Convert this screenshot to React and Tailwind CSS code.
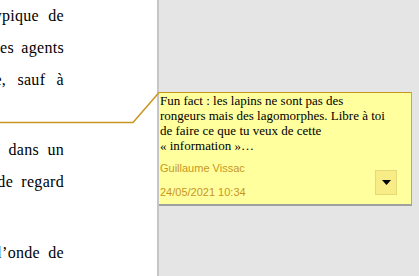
export default function App() {
  const serif = { fontFamily: '"Liberation Serif", "Times New Roman", serif' };

  const Line = ({ children, className = "" }) => (
    <div className={`flex h-[32px] items-center justify-end overflow-hidden whitespace-nowrap leading-[32px] ${className}`}>
      {children}
    </div>
  );

  return (
    <div className="relative flex h-[276px] w-[419px] overflow-hidden bg-[#e5e5e5]">
      {/* page */}
      <div className="w-[157px] shrink-0 bg-white">
        <div className="w-[64px] text-[16px] tracking-[0.3px] text-black" style={serif}>
          <Line className="[word-spacing:5px]">typique de</Line>
          <Line className="[word-spacing:3px]">les agents</Line>
          <Line className="[word-spacing:7px]">monde, sauf à</Line>
          <Line>&nbsp;</Line>
          <div className="mt-[6px]">
            <Line className="[word-spacing:4px]">dans un</Line>
            <Line className="[word-spacing:4px]">de regard</Line>
            <Line>&nbsp;</Line>
          </div>
          <div className="mt-[7px]">
            <Line className="[word-spacing:4px]">l’onde de</Line>
          </div>
        </div>
      </div>
      <div className="w-[2px] shrink-0 bg-[#c6c6c6]" />

      {/* comment margin */}
      <div className="flex-1 pt-[92px]">
        <div className="w-[253px] border-t border-r border-b-2 border-t-[#c8961e] border-r-[#a8a8a8] border-b-[#a0a0a0] bg-[#ffff9e]">
          <p className="pl-[1px] text-[13px] leading-[15px] text-black" style={serif}>
            Fun fact : les lapins ne sont pas des
            <br />
            rongeurs mais des lagomorphes. Libre à toi
            <br />
            de faire ce que tu veux de cette
            <br />« information »…
          </p>
          <div
            className="flex justify-between pt-[8px] pb-[5px] pl-[1px] pr-[14px] text-[11px] leading-[14px] text-[#c8961e]"
            style={{ fontFamily: '"Liberation Sans", Arial, sans-serif' }}
          >
            <div className="flex flex-col gap-[10px]">
              <span>Guillaume Vissac</span>
              <span>24/05/2021 10:34</span>
            </div>
            <button className="mt-[9px] flex h-[25px] w-[22px] items-center justify-center border border-[#e8d878] bg-[#f7ec86]">
              <svg width="9" height="5" viewBox="0 0 9 5">
                <path d="M0 0h9L4.5 5z" fill="#000" />
              </svg>
            </button>
          </div>
        </div>
      </div>

      {/* connector from anchor to comment */}
      <svg className="pointer-events-none absolute left-0 top-0" width="419" height="276">
        <polyline points="0,122.5 133,122.5 159,92.5" fill="none" stroke="#c8961e" strokeWidth="1.5" />
      </svg>
    </div>
  );
}
